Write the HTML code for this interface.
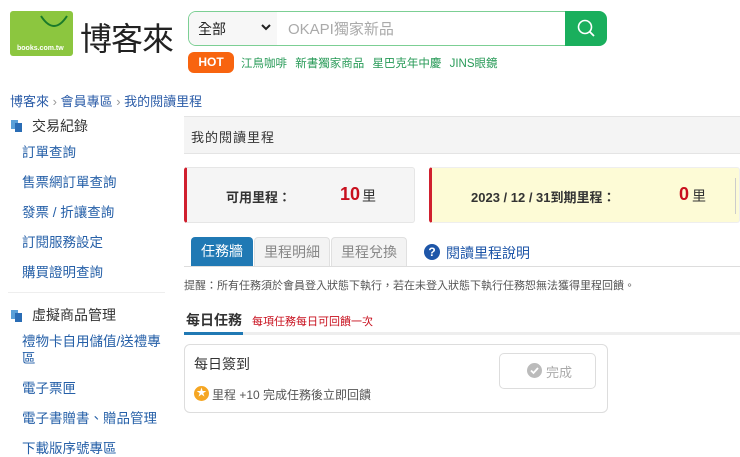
<!DOCTYPE html>
<html><head><meta charset="utf-8"><style>
*{margin:0;padding:0;box-sizing:border-box}
body{width:740px;height:457px;overflow:hidden;background:#fff;font-family:"Liberation Sans","Noto Sans CJK TC",sans-serif;position:relative;color:#333}
.a{position:absolute;white-space:nowrap}
.sl{font-size:13.5px;color:#2660a8}
</style></head><body>
<div class="a" style="left:10px;top:11px;width:63px;height:45px;background:#8cc63f;border-radius:3px"></div>
<svg class="a" style="left:38px;top:14px" width="32" height="16"><path d="M3 2 Q16 22 29 2" fill="none" stroke="#1a7a2a" stroke-width="2"/></svg>
<div class="a" style="left:17px;top:45px;font-size:7px;color:#fff;font-weight:bold">books.com.tw</div>
<div class="a" style="left:80px;top:14px;font-size:32px;color:#222;letter-spacing:-1px">博客來</div>

<div class="a" style="left:188px;top:11px;width:378px;height:35px;border:1px solid #7ccf94;border-right:none;border-radius:8px 0 0 8px"></div>
<div class="a" style="left:189px;top:12px;width:88px;height:33px;background:#f7f7f7;border-radius:7px 0 0 7px"></div>
<div class="a" style="left:198px;top:19px;font-size:14px;color:#222">全部</div>
<svg class="a" style="left:260px;top:23px" width="12" height="9"><path d="M2 2 L6 6 L10 2" fill="none" stroke="#222" stroke-width="2"/></svg>
<div class="a" style="left:288px;top:18px;font-size:15px;color:#aaa">OKAPI獨家新品</div>
<div class="a" style="left:565px;top:11px;width:42px;height:35px;background:#1aaf5d;border-radius:0 8px 8px 0"></div>
<svg class="a" style="left:576px;top:18px" width="20" height="20"><circle cx="9" cy="9" r="6.5" fill="none" stroke="#fff" stroke-width="1.6"/><path d="M13.5 13.5 L18 18" stroke="#fff" stroke-width="1.8"/></svg>

<div class="a" style="left:188px;top:52px;width:46px;height:21px;background:#f8640f;border-radius:6px;color:#fff;font-size:12px;font-weight:bold;text-align:center;line-height:21px">HOT</div>
<div class="a" style="left:241px;top:55px;font-size:11.5px;color:#279a57;word-spacing:5px">江鳥咖啡 新書獨家商品 星巴克年中慶 JINS眼鏡</div>

<div class="a" style="left:10px;top:91px;font-size:13px;color:#2b5ca8">博客來 <span style="color:#999">›</span> 會員專區 <span style="color:#999">›</span> 我的閱讀里程</div>

<svg class="a" style="left:11px;top:119px" width="12" height="13"><rect x="0" y="1" width="7" height="9" fill="#5aa0d8"/><rect x="4" y="4" width="7" height="9" fill="#2a6db5"/></svg>
<div class="a" style="left:32px;top:116px;font-size:14px;color:#333">交易紀錄</div>
<div class="a sl" style="left:22px;top:141px">訂單查詢</div>
<div class="a sl" style="left:22px;top:171px">售票網訂單查詢</div>
<div class="a sl" style="left:22px;top:201px">發票 / 折讓查詢</div>
<div class="a sl" style="left:22px;top:231px">訂閱服務設定</div>
<div class="a sl" style="left:22px;top:261px">購買證明查詢</div>
<div class="a" style="left:8px;top:292px;width:157px;height:1px;background:#eee"></div>
<svg class="a" style="left:11px;top:309px" width="12" height="13"><rect x="0" y="1" width="7" height="9" fill="#5aa0d8"/><rect x="4" y="4" width="7" height="9" fill="#2a6db5"/></svg>
<div class="a" style="left:32px;top:305px;font-size:14px;color:#333">虛擬商品管理</div>
<div class="a sl" style="left:22px;top:330px">禮物卡自用儲值/送禮專</div>
<div class="a sl" style="left:22px;top:347px">區</div>
<div class="a sl" style="left:22px;top:377px">電子票匣</div>
<div class="a sl" style="left:22px;top:407px">電子書贈書、贈品管理</div>
<div class="a sl" style="left:22px;top:437px">下載版序號專區</div>

<div class="a" style="left:184px;top:116px;width:556px;height:38px;background:#f4f4f4;border-top:1px solid #e4e4e4;border-bottom:1px solid #e4e4e4"></div>
<div class="a" style="left:191px;top:127px;font-size:13px;color:#333;letter-spacing:1px">我的閱讀里程</div>

<div class="a" style="left:184px;top:167px;width:231px;height:56px;background:#f5f5f5;border:1px solid #e6e6e6;border-left:3px solid #d0202e;border-radius:3px"></div>
<div class="a" style="left:226px;top:187px;font-size:13px;color:#333;font-weight:bold">可用里程：</div>
<div class="a" style="left:340px;top:184px;font-size:18px;color:#c8101e;font-weight:bold">10</div>
<div class="a" style="left:362px;top:186px;font-size:14px;color:#333">里</div>
<div class="a" style="left:429px;top:167px;width:311px;height:56px;background:#fdfbd6;border:1px solid #eee;border-left:3px solid #d0202e;border-radius:3px"></div>
<div class="a" style="left:735px;top:178px;width:1px;height:36px;background:#ccc"></div>
<div class="a" style="left:471px;top:187px;font-size:13px;color:#333;font-weight:bold">2023 / 12 / 31到期里程：</div>
<div class="a" style="left:679px;top:184px;font-size:18px;color:#c8101e;font-weight:bold">0</div>
<div class="a" style="left:692px;top:186px;font-size:14px;color:#333">里</div>

<div class="a" style="left:191px;top:237px;width:62px;height:30px;background:#2079b4;border-radius:4px 4px 0 0;color:#fff;font-size:14px;text-align:center;line-height:29px">任務牆</div>
<div class="a" style="left:254px;top:237px;width:76px;height:30px;background:#f3f3f3;border:1px solid #e0e0e0;border-bottom:none;border-radius:4px 4px 0 0;color:#888;font-size:14px;text-align:center;line-height:28px">里程明細</div>
<div class="a" style="left:331px;top:237px;width:76px;height:30px;background:#f3f3f3;border:1px solid #e0e0e0;border-bottom:none;border-radius:4px 4px 0 0;color:#888;font-size:14px;text-align:center;line-height:28px">里程兌換</div>
<div class="a" style="left:424px;top:244px;width:16px;height:16px;border-radius:50%;background:#1e56a8;color:#fff;font-size:12px;font-weight:bold;text-align:center;line-height:16px">?</div>
<div class="a" style="left:446px;top:243px;font-size:14px;color:#1e56a8">閱讀里程說明</div>
<div class="a" style="left:184px;top:266px;width:556px;height:1px;background:#ddd"></div>
<div class="a" style="left:184px;top:277px;font-size:11px;color:#555">提醒：所有任務須於會員登入狀態下執行，若在未登入狀態下執行任務恕無法獲得里程回饋。</div>

<div class="a" style="left:186px;top:310px;font-size:14px;color:#333;font-weight:bold">每日任務</div>
<div class="a" style="left:252px;top:313px;font-size:11px;color:#c8101e">每項任務每日可回饋一次</div>
<div class="a" style="left:184px;top:332px;width:556px;height:3px;background:#eee"></div>
<div class="a" style="left:184px;top:332px;width:59px;height:3px;background:#2079b4"></div>

<div class="a" style="left:184px;top:344px;width:424px;height:69px;border:1px solid #ddd;border-radius:6px"></div>
<div class="a" style="left:194px;top:354px;font-size:14px;color:#333">每日簽到</div>
<div class="a" style="left:499px;top:353px;width:97px;height:36px;border:1px solid #ddd;border-radius:5px"></div>
<div class="a" style="left:527px;top:363px;width:15px;height:15px;border-radius:50%;background:#bbb"></div>
<svg class="a" style="left:527px;top:363px" width="15" height="15"><path d="M4 7.5 L6.5 10 L11 5" fill="none" stroke="#fff" stroke-width="1.8"/></svg>
<div class="a" style="left:546px;top:362px;font-size:13px;color:#aaa">完成</div>
<div class="a" style="left:194px;top:386px;width:15px;height:15px;border-radius:50%;background:#f5a623;color:#fff;font-size:10px;text-align:center;line-height:15px">★</div>
<div class="a" style="left:212px;top:386px;font-size:12px;color:#555">里程 +10 完成任務後立即回饋</div>
</body></html>
